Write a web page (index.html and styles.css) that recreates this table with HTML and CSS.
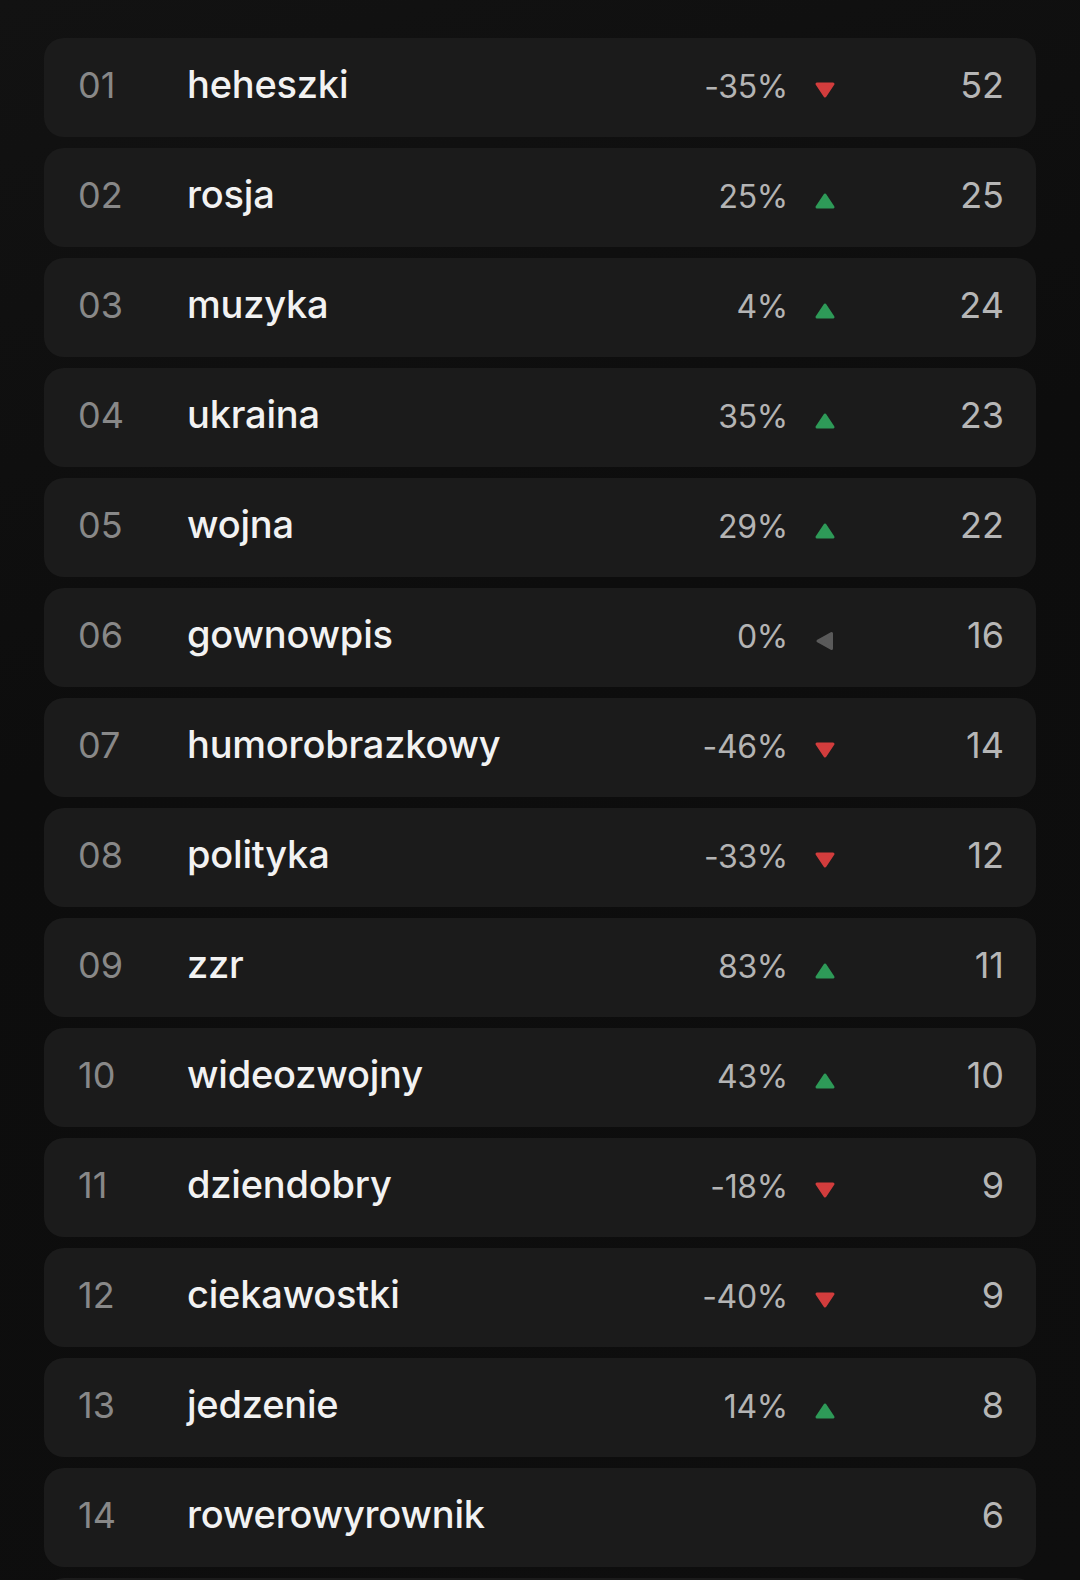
FILE: index.html
```html
<!DOCTYPE html>
<html lang="pl">
<head>
<meta charset="utf-8">
<title>Tagi</title>
<link rel="stylesheet" href="styles.css">
</head>
<body>
<ul class="list">
  <li class="row"><span class="rank">01</span><span class="name">heheszki</span><span class="pct">-35%</span><svg class="tri down" viewBox="0 0 20 16"><polygon points="2,2 18,2 10,14"/></svg><span class="count">52</span></li>
  <li class="row"><span class="rank">02</span><span class="name">rosja</span><span class="pct">25%</span><svg class="tri up" viewBox="0 0 20 16"><polygon points="10,2 18,14 2,14"/></svg><span class="count">25</span></li>
  <li class="row"><span class="rank">03</span><span class="name">muzyka</span><span class="pct">4%</span><svg class="tri up" viewBox="0 0 20 16"><polygon points="10,2 18,14 2,14"/></svg><span class="count">24</span></li>
  <li class="row"><span class="rank">04</span><span class="name">ukraina</span><span class="pct">35%</span><svg class="tri up" viewBox="0 0 20 16"><polygon points="10,2 18,14 2,14"/></svg><span class="count">23</span></li>
  <li class="row"><span class="rank">05</span><span class="name">wojna</span><span class="pct">29%</span><svg class="tri up" viewBox="0 0 20 16"><polygon points="10,2 18,14 2,14"/></svg><span class="count">22</span></li>
  <li class="row"><span class="rank">06</span><span class="name">gownowpis</span><span class="pct">0%</span><svg class="tri flat" viewBox="0 0 20 20"><polygon points="3,10 16.5,2.5 16.5,17.5"/></svg><span class="count">16</span></li>
  <li class="row"><span class="rank">07</span><span class="name">humorobrazkowy</span><span class="pct">-46%</span><svg class="tri down" viewBox="0 0 20 16"><polygon points="2,2 18,2 10,14"/></svg><span class="count">14</span></li>
  <li class="row"><span class="rank">08</span><span class="name">polityka</span><span class="pct">-33%</span><svg class="tri down" viewBox="0 0 20 16"><polygon points="2,2 18,2 10,14"/></svg><span class="count">12</span></li>
  <li class="row"><span class="rank">09</span><span class="name">zzr</span><span class="pct">83%</span><svg class="tri up" viewBox="0 0 20 16"><polygon points="10,2 18,14 2,14"/></svg><span class="count">11</span></li>
  <li class="row"><span class="rank">10</span><span class="name">wideozwojny</span><span class="pct">43%</span><svg class="tri up" viewBox="0 0 20 16"><polygon points="10,2 18,14 2,14"/></svg><span class="count">10</span></li>
  <li class="row"><span class="rank">11</span><span class="name">dziendobry</span><span class="pct">-18%</span><svg class="tri down" viewBox="0 0 20 16"><polygon points="2,2 18,2 10,14"/></svg><span class="count">9</span></li>
  <li class="row"><span class="rank">12</span><span class="name">ciekawostki</span><span class="pct">-40%</span><svg class="tri down" viewBox="0 0 20 16"><polygon points="2,2 18,2 10,14"/></svg><span class="count">9</span></li>
  <li class="row"><span class="rank">13</span><span class="name">jedzenie</span><span class="pct">14%</span><svg class="tri up" viewBox="0 0 20 16"><polygon points="10,2 18,14 2,14"/></svg><span class="count">8</span></li>
  <li class="row"><span class="rank">14</span><span class="name">rowerowyrownik</span><span class="pct"></span><svg class="tri none" viewBox="0 0 20 16"></svg><span class="count">6</span></li>
  <li class="row" aria-hidden="true"></li>
</ul>
</body>
</html>
```

FILE: styles.css
```css
html, body {
  margin: 0;
  padding: 0;
  background: #0e0e0e;
  height: 1580px;
  overflow: hidden;
}
body {
  font-family: Inter, "Noto Sans", sans-serif;
  background: linear-gradient(160deg, #121212 0%, #0d0d0d 40%, #0e0e0e 100%);
}
.list {
  list-style: none;
  margin: 0;
  padding: 38px 44px 0 44px;
  display: flex;
  flex-direction: column;
  gap: 11px;
}
.row {
  height: 99px;
  flex-shrink: 0;
  box-sizing: border-box;
  background: #1b1b1b;
  border-radius: 20px;
  display: flex;
  align-items: baseline;
  padding: 0 32px 6px 34px;
  line-height: 93px;
}
.rank {
  width: 109px;
  color: #888888;
  font-size: 36px;
  font-weight: 400;
}
.name {
  flex: 1;
  color: #f2f2f2;
  font-size: 38px;
  font-weight: 500;
  letter-spacing: -0.2px;
}
.pct {
  color: #b4b4b4;
  font-size: 32px;
  font-weight: 400;
  letter-spacing: -0.3px;
}
.tri {
  width: 20px;
  height: 16px;
  margin: 0 109px 0 27px;
  display: inline-block;
  overflow: visible;
}
.tri polygon {
  stroke-width: 3;
  stroke-linejoin: round;
}
.tri.up polygon {
  fill: #2e9a58;
  stroke: #2e9a58;
}
.tri.up {
  transform: translateY(1px);
}
.tri.down polygon {
  fill: #d23d3d;
  stroke: #d23d3d;
}
.tri.flat {
  height: 20px;
  transform: translateY(3px);
}
.tri.flat polygon {
  fill: #5a5a5a;
  stroke: #5a5a5a;
}
.tri.none {
  visibility: hidden;
}
.count {
  min-width: 60px;
  text-align: right;
  color: #b6b6b6;
  font-size: 36px;
  font-weight: 400;
}
```
